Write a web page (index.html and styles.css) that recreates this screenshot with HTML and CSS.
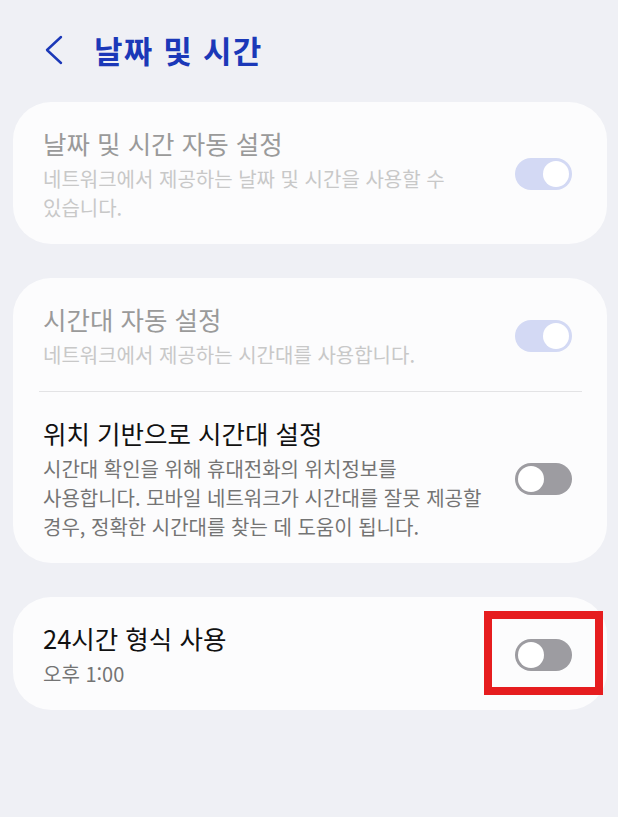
FILE: index.html
```html
<!DOCTYPE html>
<html lang="ko">
<head>
    <meta charset="UTF-8">
    <meta name="viewport" content="width=device-width, initial-scale=1.0">
    <title>날짜 및 시간</title>
    <link rel="stylesheet" href="styles.css">
</head>
<body>
    <header class="topbar">
        <svg class="back" viewBox="0 0 18 30" width="18" height="30">
            <path d="M16 2 L2 15 L16 28" fill="none" stroke="#1b38b8" stroke-width="2.4" stroke-linecap="round" stroke-linejoin="round"/>
        </svg>
        <h1>날짜 및 시간</h1>
    </header>

    <section class="card">
        <div class="row">
            <div class="text">
                <div class="title muted">날짜 및 시간 자동 설정</div>
                <div class="sub faint">네트워크에서 제공하는 날짜 및 시간을 사용할 수 있습니다.</div>
            </div>
            <span class="toggle on disabled"></span>
        </div>
    </section>

    <section class="card">
        <div class="row">
            <div class="text">
                <div class="title muted">시간대 자동 설정</div>
                <div class="sub faint">네트워크에서 제공하는 시간대를 사용합니다.</div>
            </div>
            <span class="toggle on disabled"></span>
        </div>
        <hr class="divider">
        <div class="row">
            <div class="text">
                <div class="title">위치 기반으로 시간대 설정</div>
                <div class="sub">시간대 확인을 위해 휴대전화의 위치정보를 사용합니다. 모바일 네트워크가 시간대를 잘못 제공할 경우, 정확한 시간대를 찾는 데 도움이 됩니다.</div>
            </div>
            <span class="toggle"></span>
        </div>
    </section>

    <section class="card">
        <div class="row">
            <div class="text">
                <div class="title">24시간 형식 사용</div>
                <div class="sub">오후 1:00</div>
            </div>
            <span class="toggle marked"><span class="highlight"></span></span>
        </div>
    </section>
</body>
</html>
```

FILE: styles.css
```css
body {
    margin: 0;
    background: #eff0f5;
    font-family: 'Noto Sans CJK KR', 'Noto Sans', sans-serif;
    color: #111;
    word-break: keep-all;
}
.topbar {
    height: 102px;
    padding: 0 0 2px 45px;
    box-sizing: border-box;
    display: flex;
    align-items: center;
}
.back {
    margin-right: 31px;
}
h1 {
    margin: 0;
    font-size: 31px;
    font-weight: 700;
    letter-spacing: 1.2px;
    color: #1b38b8;
    line-height: 40px;
}
.card {
    margin: 0 11px 34px 13px;
    background: #fcfcfd;
    border-radius: 38px;
}
.row {
    display: flex;
    align-items: center;
    padding: 24px 35px 22px 30px;
}
.text {
    width: 448px;
    margin-right: 24px;
}
.title {
    font-size: 25.5px;
    line-height: 34px;
}
.sub {
    margin-top: 4px;
    font-size: 20px;
    line-height: 29px;
    color: #747474;
}
.muted {
    color: #9a9a9a;
}
.faint {
    color: #c8c8c8;
}
.divider {
    margin: 0 25px 0 26px;
    border: none;
    border-top: 1px solid #e3e3e5;
}
.toggle {
    position: relative;
    flex: none;
    width: 57px;
    height: 32px;
    border-radius: 16px;
    background: #9d9ca1;
}
.toggle::after {
    content: '';
    position: absolute;
    top: 3px;
    left: 3px;
    width: 26px;
    height: 26px;
    border-radius: 50%;
    background: #fff;
}
.toggle.on::after {
    left: auto;
    right: 3px;
}
.toggle.disabled {
    background: #d3d9f4;
}
.highlight {
    position: absolute;
    left: -31px;
    top: -28px;
    width: 119px;
    height: 84px;
    border: 8px solid #e61d1f;
    box-sizing: border-box;
}
```
